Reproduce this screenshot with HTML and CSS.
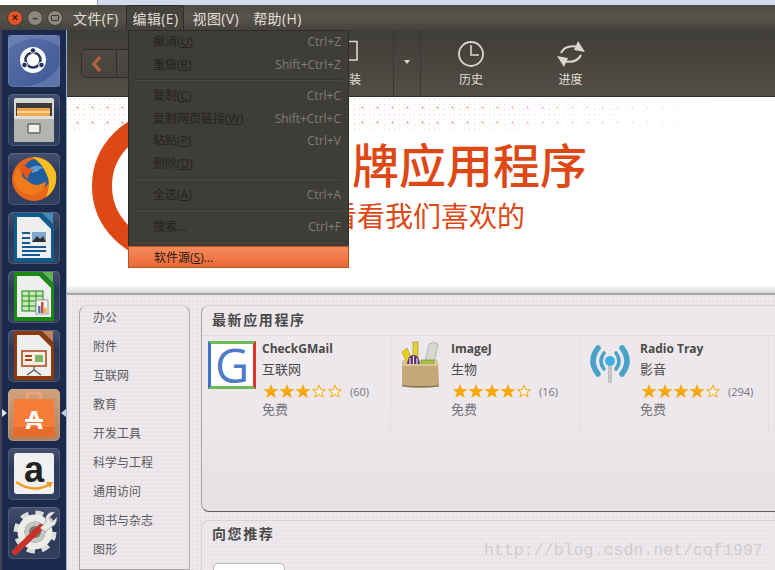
FILE: index.html
```html
<!DOCTYPE html>
<html>
  <head>
    <meta charset="utf-8">
    <title>Ubuntu 软件中心</title>
    <link rel="stylesheet" href="styles.css">
  </head>
  <body>
    <svg class="defs" width="0" height="0">
      <symbol id="star" viewBox="0 0 16 16"><polygon points="8,1 10,6 15.5,6.2 11.2,9.6 12.8,15 8,11.9 3.2,15 4.8,9.6 .5,6.2 6,6" fill="#f9a70f"/></symbol>
      <symbol id="star-empty" viewBox="0 0 16 16"><polygon points="8,2 9.8,6.6 14.4,6.8 10.8,9.6 12.1,14 8,11.4 3.9,14 5.2,9.6 1.6,6.8 6.2,6.6" fill="#f5f0ea" stroke="#f9a70f" stroke-width="1"/></symbol>
    </svg>

    <div class="desktop-strip"><div class="behind-window"></div></div>

    <header class="titlebar">
      <div class="window-buttons">
        <span class="win-btn close">×</span>
        <span class="win-btn">–</span>
        <span class="win-btn"><i class="max-box"></i></span>
      </div>
      <nav class="menubar">
        <span class="menubar-item">文件(F)</span>
        <span class="menubar-item active">编辑(E)</span>
        <span class="menubar-item">视图(V)</span>
        <span class="menubar-item">帮助(H)</span>
      </nav>
    </header>

    <div class="main">
      <aside class="launcher">
        <div class="tile tile-ubuntu">
          <svg viewBox="0 0 52 52">
            <path d="M0 14 Q26 -6 52 12 V0 H0Z M52 30 Q40 50 14 52 H52Z" fill="#8093c0" opacity=".45"/>
            <circle cx="25" cy="25" r="13" fill="#fff"/>
            <circle cx="25" cy="25" r="7.5" fill="none" stroke="#27345c" stroke-width="2.6"/>
            <circle cx="25" cy="15.5" r="2.8" fill="#27345c" stroke="#fff"/>
            <circle cx="16.5" cy="30" r="2.8" fill="#27345c" stroke="#fff"/>
            <circle cx="33.5" cy="30" r="2.8" fill="#27345c" stroke="#fff"/>
          </svg>
        </div>
        <div class="tile">
          <svg viewBox="0 0 52 52">
            <rect x="6" y="4" width="40" height="44" rx="2" fill="#d8d8d4"/>
            <rect x="8" y="9" width="36" height="14" fill="#3c3c3a"/>
            <rect x="9" y="14" width="33" height="10" fill="#f2a54a"/>
            <rect x="9" y="17" width="33" height="2" fill="#fbd78f"/>
            <rect x="6" y="22" width="40" height="26" rx="1" fill="#b5b5b0"/>
            <rect x="6" y="22" width="40" height="3" fill="#dededa"/>
            <rect x="20" y="30" width="12" height="9" rx="1" fill="#f0f0ec" stroke="#666" stroke-width="1.4"/>
          </svg>
        </div>
        <div class="tile">
          <svg viewBox="0 0 52 52">
            <circle cx="26" cy="26" r="22" fill="#e8661c"/>
            <circle cx="29" cy="21" r="15" fill="#1f5f9f"/>
            <path d="M22 15 Q30 10 37 16 Q32 14 30 18 L24 20Z" fill="#5f9fd0"/>
            <path d="M24 4 Q42 4 48 20 Q50 36 38 44 Q44 30 38 20 Q34 10 24 4Z" fill="#f9bd1f"/>
            <path d="M10 14 Q14 26 20 28 Q28 36 38 28 Q36 42 22 42 Q6 38 6 24Z" fill="#f07a1c"/>
            <path d="M14 10 Q18 16 26 16 Q20 20 20 26 Q12 22 14 10Z" fill="#e8561a"/>
          </svg>
        </div>
        <div class="tile">
          <svg viewBox="0 0 52 52">
            <path d="M6 1 H33 L46 14 V50 H6Z" fill="#0e5b8c"/>
            <path d="M34 1 H45 V12Z" fill="#3f8db9"/>
            <path d="M9 5 H31 L43 17 V46 H9Z" fill="#eeeeee"/>
            <rect x="14" y="20" width="8" height="2" fill="#125a94"/>
            <rect x="14" y="25" width="8" height="2" fill="#125a94"/>
            <rect x="14" y="30" width="8" height="2" fill="#125a94"/>
            <rect x="24" y="20" width="14" height="10" fill="#7fa9cf"/>
            <path d="M24 30 L29 24 L32 27 L35 24 L38 30Z" fill="#2f2f2f"/>
            <rect x="14" y="34" width="24" height="2" fill="#125a94"/>
            <rect x="14" y="38" width="24" height="2" fill="#125a94"/>
            <rect x="14" y="42" width="18" height="2" fill="#125a94"/>
          </svg>
        </div>
        <div class="tile">
          <svg viewBox="0 0 52 52">
            <path d="M6 1 H33 L46 14 V50 H6Z" fill="#1b8a12"/>
            <path d="M34 1 H45 V12Z" fill="#5cb356"/>
            <path d="M9 5 H31 L43 17 V46 H9Z" fill="#eeeeee"/>
            <rect x="14" y="20" width="21" height="20" fill="#c8e8b8" stroke="#1b8a12"/>
            <path d="M14 25 H35 M14 30 H35 M14 35 H35 M21 20 V40 M28 20 V40" stroke="#1b8a12"/>
            <rect x="28" y="29" width="12" height="14" fill="#f4f4f4" stroke="#999"/>
            <rect x="30" y="35" width="2.5" height="7" fill="#3d7fc0"/>
            <rect x="33" y="31" width="2.5" height="11" fill="#d8492a"/>
            <rect x="36" y="37" width="2.5" height="5" fill="#e8b33a"/>
          </svg>
        </div>
        <div class="tile">
          <svg viewBox="0 0 52 52">
            <path d="M6 1 H33 L46 14 V50 H6Z" fill="#8c3a0b"/>
            <path d="M34 1 H45 V12Z" fill="#c0825a"/>
            <path d="M9 5 H31 L43 17 V46 H9Z" fill="#eeeeee"/>
            <rect x="14" y="21" width="24" height="15" fill="#fbeee0" stroke="#a8431a" stroke-width="1.5"/>
            <rect x="17" y="25" width="7" height="2" fill="#a8431a"/>
            <rect x="17" y="29" width="7" height="2" fill="#a8431a"/>
            <rect x="27" y="25" width="8" height="7" fill="#7db56a"/>
            <path d="M26 36 V40 M26 40 L19 45 M26 40 L33 45" stroke="#555" stroke-width="1.2" fill="none"/>
          </svg>
        </div>
        <div class="launcher-item-active">
          <span class="pip pip-left"></span>
          <div class="tile tile-software">
            <svg viewBox="0 0 52 52">
              <path d="M19 13 V8 Q19 4 23 4 H29 Q33 4 33 8 V13" fill="none" stroke="#f3a27a" stroke-width="3"/>
              <path d="M6 10 H46 L47 48 H5Z" fill="#f67c3a"/>
              <path d="M5.4 38 H46.6 L47 48 H5Z" fill="#e66c2c"/>
              <text class="bag-letter" x="26" y="40" text-anchor="middle">A</text>
              <rect x="17" y="30" width="18" height="3" fill="#fff"/>
              <rect x="19" y="33" width="14" height="1" fill="#f67c3a"/>
            </svg>
          </div>
          <span class="pip pip-right"></span>
        </div>
        <div class="tile">
          <svg viewBox="0 0 52 52">
            <rect x="6" y="5" width="40" height="41" rx="3" fill="#f0f0f0"/>
            <text class="amazon-letter" x="26" y="34" text-anchor="middle">a</text>
            <path d="M8 34 Q26 46 42 36" fill="none" stroke="#f39a1e" stroke-width="2.4"/>
            <path d="M38 34 L45 34 L42 40Z" fill="#f39a1e"/>
          </svg>
        </div>
        <div class="tile">
          <svg viewBox="0 0 52 52">
            <circle cx="27" cy="25" r="19" fill="none" stroke="#dcdcd8" stroke-width="5" stroke-dasharray="8 6.9"/>
            <circle cx="27" cy="25" r="14" fill="none" stroke="#ececE8" stroke-width="7"/>
            <circle cx="27" cy="25" r="10.5" fill="#c6c6c2"/>
            <circle cx="27" cy="25" r="6" fill="#77776f"/>
            <path d="M7 45 L33 20" stroke="#c8322a" stroke-width="6" stroke-linecap="round"/>
            <path d="M32 21 L38 15 Q36 8 43 5 L47 5 L41 11 L44 15 L49 10 Q49 18 43 20 L37 25Z" fill="#e8e8e4" stroke="#888" stroke-width=".6"/>
          </svg>
        </div>
      </aside>

      <div class="app">
        <div class="toolbar">
          <div class="nav-group">
            <span class="nav-back">
              <svg width="14" height="18" viewBox="0 0 14 18"><path d="M10 2 L4 9 L10 16" fill="none" stroke="#b5633a" stroke-width="3.4"/></svg>
            </span>
          </div>
          <div class="tool tool-install">
            <svg width="30" height="30" viewBox="0 0 30 30"><path d="M0 2.5 H8 V21 H0" fill="none" stroke="#d9d6cf" stroke-width="1.6"/></svg>
            <span>装</span>
          </div>
          <div class="tool-arrow"></div>
          <div class="tool">
            <svg width="30" height="30" viewBox="0 0 30 30">
              <circle cx="15" cy="15" r="12" fill="none" stroke="#d9d6cf" stroke-width="1.8"/>
              <path d="M15 6 V16 H23" fill="none" stroke="#d9d6cf" stroke-width="1.6"/>
            </svg>
            <span>历史</span>
          </div>
          <div class="tool tool-last">
            <svg width="30" height="30" viewBox="0 0 30 30">
              <g id="sync-half">
                <path d="M5 14 Q9 6 20 7.5" fill="none" stroke="#d9d6cf" stroke-width="2.2"/>
                <polygon points="22,2 29,13 18,11" fill="#d9d6cf"/>
              </g>
              <use href="#sync-half" transform="rotate(180 15 15)"/>
            </svg>
            <span>进度</span>
          </div>
        </div>

        <section class="banner">
          <div class="dots"></div>
          <div class="ring"></div>
          <h1 class="banner-title">牌应用程序</h1>
          <p class="banner-sub">看看我们喜欢的</p>
        </section>

        <div class="lower">
          <ul class="categories">
            <li>办公</li>
            <li>附件</li>
            <li>互联网</li>
            <li>教育</li>
            <li>开发工具</li>
            <li>科学与工程</li>
            <li>通用访问</li>
            <li>图书与杂志</li>
            <li>图形</li>
          </ul>
          <div class="panels">
            <section class="panel panel-new">
              <h2 class="panel-title">最新应用程序</h2>
              <div class="cards">
                <article class="card">
                  <div class="app-icon icon-g"><span>G</span></div>
                  <div class="card-text">
                    <div class="app-name">CheckGMail</div>
                    <div class="app-cat">互联网</div>
                    <div class="rating">
                      <svg><use href="#star"/></svg><svg><use href="#star"/></svg><svg><use href="#star"/></svg><svg><use href="#star-empty"/></svg><svg><use href="#star-empty"/></svg>
                      <span class="count">(60)</span>
                    </div>
                    <div class="price">免费</div>
                  </div>
                </article>
                <article class="card">
                  <div class="app-icon">
                    <svg width="48" height="48" viewBox="0 0 48 48">
                      <path d="M5 11 L10 7 L16 21 L11 24Z" fill="#e8d020" stroke="#9a8a10" stroke-width=".6"/>
                      <rect x="16" y="1" width="5" height="18" fill="#e8cf3c" stroke="#9a8a10" stroke-width=".6"/>
                      <path d="M28 21 L32 3 Q37 0 41 3 L37 22Z" fill="#d8d8d2" stroke="#999" stroke-width=".6"/>
                      <path d="M10 26 Q10 14 16.5 14 Q23 14 23 26Z" fill="#5c2a6a"/>
                      <path d="M13 26 V17 M16.5 26 V15 M20 26 V17" stroke="#eee" stroke-width="1.2"/>
                      <rect x="24" y="19" width="13" height="6" fill="#a8c040" stroke="#6c7c20" stroke-width=".6"/>
                      <path d="M5 23 H41 L42 44 Q24 46 5 44Z" fill="#c4a877"/>
                      <path d="M5 20 L8 18 L10 23 H37 L39 18 L41 20 L42 25 H5Z" fill="#dcc498"/>
                      <path d="M5 44 Q24 46 42 44 V45.5 Q24 48 5 45.5Z" fill="#8c7448"/>
                    </svg>
                  </div>
                  <div class="card-text">
                    <div class="app-name">ImageJ</div>
                    <div class="app-cat">生物</div>
                    <div class="rating">
                      <svg><use href="#star"/></svg><svg><use href="#star"/></svg><svg><use href="#star"/></svg><svg><use href="#star"/></svg><svg><use href="#star-empty"/></svg>
                      <span class="count">(16)</span>
                    </div>
                    <div class="price">免费</div>
                  </div>
                </article>
                <article class="card">
                  <div class="app-icon">
                    <svg width="48" height="48" viewBox="0 0 48 48">
                      <rect x="22" y="22" width="4" height="20" fill="#c4c4c4"/>
                      <path d="M12 7 Q2 20 12 33" fill="none" stroke="#4aa3c6" stroke-width="5.5" stroke-linecap="round"/>
                      <path d="M36 7 Q46 20 36 33" fill="none" stroke="#4aa3c6" stroke-width="5.5" stroke-linecap="round"/>
                      <path d="M18 12 Q12 20 18 28" fill="none" stroke="#4aa3c6" stroke-width="3.6" stroke-linecap="round"/>
                      <path d="M30 12 Q36 20 30 28" fill="none" stroke="#4aa3c6" stroke-width="3.6" stroke-linecap="round"/>
                      <circle cx="24" cy="20" r="5" fill="#3fb0e6"/>
                    </svg>
                  </div>
                  <div class="card-text">
                    <div class="app-name">Radio Tray</div>
                    <div class="app-cat">影音</div>
                    <div class="rating">
                      <svg><use href="#star"/></svg><svg><use href="#star"/></svg><svg><use href="#star"/></svg><svg><use href="#star"/></svg><svg><use href="#star-empty"/></svg>
                      <span class="count">(294)</span>
                    </div>
                    <div class="price">免费</div>
                  </div>
                </article>
                <article class="card"></article>
              </div>
            </section>
            <section class="panel panel-rec">
              <h2 class="panel-title">向您推荐</h2>
              <div class="rec-tile"></div>
            </section>
          </div>
        </div>
      </div>
    </div>

    <div class="edit-menu">
      <div class="menu-row"><span>撤消(<u>U</u>)</span><span class="shortcut">Ctrl+Z</span></div>
      <div class="menu-row"><span>重做(<u>R</u>)</span><span class="shortcut">Shift+Ctrl+Z</span></div>
      <div class="menu-sep"></div>
      <div class="menu-row"><span>复制(<u>C</u>)</span><span class="shortcut">Ctrl+C</span></div>
      <div class="menu-row"><span>复制网页链接(<u>W</u>)</span><span class="shortcut">Shift+Ctrl+C</span></div>
      <div class="menu-row"><span>粘贴(<u>P</u>)</span><span class="shortcut">Ctrl+V</span></div>
      <div class="menu-row"><span>删除(<u>D</u>)</span></div>
      <div class="menu-sep"></div>
      <div class="menu-row"><span>全选(<u>A</u>)</span><span class="shortcut">Ctrl+A</span></div>
      <div class="menu-sep"></div>
      <div class="menu-row"><span>搜索...</span><span class="shortcut">Ctrl+F</span></div>
      <div class="menu-sep"></div>
      <div class="menu-row selected"><span>软件源(<u>S</u>)...</span></div>
    </div>

    <div class="watermark">http://blog.csdn.net/cqf1997</div>
  </body>
</html>
```
FILE: styles.css
```css
* {
  box-sizing: border-box;
}
html, body {
  margin: 0;
  padding: 0;
}
body {
  position: relative;
  width: 775px;
  height: 570px;
  overflow: hidden;
  display: flex;
  flex-direction: column;
  font-family: "Open Sans", "Noto Sans CJK SC", sans-serif;
  background: #ece8ec;
}
.defs {
  position: absolute;
}

/* window chrome */
.desktop-strip {
  height: 5px;
  flex: none;
  background: #d5daee;
}
.behind-window {
  width: 98px;
  height: 5px;
  background: #fff;
  border-right: 1px solid #9aa0b4;
}
.titlebar {
  height: 25px;
  flex: none;
  display: flex;
  align-items: center;
  background: linear-gradient(#4a4841, #57544c 45%, #45433d);
}
.window-buttons {
  display: flex;
  gap: 4px;
  margin-left: 7px;
  width: 60px;
}
.win-btn {
  width: 16px;
  height: 16px;
  border-radius: 50%;
  background: #8c887c;
  border: 1px solid #3c3a34;
  color: #3a3832;
  font-size: 12px;
  line-height: 13px;
  font-weight: 700;
  text-align: center;
  display: flex;
  align-items: center;
  justify-content: center;
}
.win-btn.close {
  background: #e2552a;
  color: #4a1a08;
}
.max-box {
  display: block;
  width: 8px;
  height: 6px;
  border: 1px solid #3a3832;
  border-radius: 1px;
}
.menubar {
  display: flex;
  height: 25px;
}
.menubar-item {
  padding: 0 4px 0 5px;
  margin-right: 3px;
  font-size: 14px;
  letter-spacing: .4px;
  line-height: 25px;
  color: #e2ded6;
  border: 1px solid transparent;
  border-bottom: none;
  white-space: nowrap;
}
.menubar-item.active {
  background: #44423c;
  border-color: #2e2d29;
  border-radius: 3px 3px 0 0;
}

/* launcher */
.main {
  flex: 1;
  display: flex;
  min-height: 0;
}
.launcher {
  width: 67px;
  flex: none;
  display: flex;
  flex-direction: column;
  align-items: center;
  gap: 7px;
  padding-top: 5px;
  background: #1b2a4c;
  border-left: 2px solid #3b4254;
  border-right: 1px solid #8fb0d8;
}
.tile {
  width: 52px;
  height: 52px;
  flex: none;
  border-radius: 5px;
  background: linear-gradient(#46506e, #2a3858 40%, #34405f);
  box-shadow: inset 0 0 0 1px rgba(255, 255, 255, .12);
}
.tile svg {
  display: block;
  width: 52px;
  height: 52px;
}
.tile-ubuntu {
  background: linear-gradient(135deg, #5a70a8, #3f5a96);
}
.tile-software {
  background: linear-gradient(#cfa27c, #ab8460);
}
.launcher-item-active {
  position: relative;
  height: 52px;
  width: 52px;
}
.pip {
  position: absolute;
  top: 20px;
  width: 0;
  height: 0;
  border-top: 4px solid transparent;
  border-bottom: 4px solid transparent;
}
.pip-left {
  left: -6px;
  border-left: 5px solid #dfe3ea;
}
.pip-right {
  right: -6px;
  border-right: 5px solid #c4d0e2;
}
.bag-letter {
  font: 700 25px "Open Sans", sans-serif;
  fill: #fff;
}
.amazon-letter {
  font: 700 36px "Liberation Sans", sans-serif;
  fill: #222;
}

/* toolbar */
.app {
  flex: 1;
  min-width: 0;
  display: flex;
  flex-direction: column;
}
.toolbar {
  height: 67px;
  flex: none;
  display: flex;
  background: linear-gradient(#3f3d37, #514e46);
  border-bottom: 1px solid #2f2e2a;
}
.nav-group {
  width: 70px;
  height: 29px;
  margin: 19px 0 0 14px;
  border: 1px solid #2f2e2a;
  border-radius: 5px;
  background: linear-gradient(#4d4a43, #45433c);
}
.nav-back {
  display: flex;
  align-items: center;
  justify-content: center;
  width: 35px;
  height: 27px;
  padding-right: 4px;
  border-right: 1px solid #2f2e2a;
}
.tool {
  width: 100px;
  padding-top: 9px;
  display: flex;
  flex-direction: column;
  align-items: center;
  color: #e2ded6;
  font-size: 12px;
  line-height: 18px;
}
.tool svg {
  display: block;
  margin-bottom: 2px;
}
.tool-install {
  width: 44px;
  margin-left: 198px;
  align-items: flex-start;
}
.tool-last {
  width: 99px;
}
.tool-arrow {
  width: 28px;
  position: relative;
  border-left: 1px solid #3a3833;
  border-right: 1px solid #3a3833;
}
.tool-arrow::after {
  content: "";
  position: absolute;
  left: 10px;
  top: 30px;
  border-left: 3px solid transparent;
  border-right: 3px solid transparent;
  border-top: 4px solid #d9d6cf;
}

/* banner */
.banner {
  position: relative;
  height: 198px;
  flex: none;
  padding: 40px 0 0 285px;
  overflow: hidden;
  background: linear-gradient(#fff 188px, #d8d6d6 196px);
  border-bottom: 2px solid #a5a3a5;
}
.dots {
  position: absolute;
  left: 0;
  top: 0;
  right: 0;
  height: 34px;
  background:
    radial-gradient(circle, #f5b8a6 1px, transparent 1.4px) 3px 3px / 15px 15px,
    radial-gradient(circle, #f8cfc4 .5px, transparent .9px) 0 0 / 5px 5px;
  -webkit-mask-image: linear-gradient(to right, #000 55%, transparent 92%);
  mask-image: linear-gradient(to right, #000 55%, transparent 92%);
}
.ring {
  position: absolute;
  left: 25px;
  top: 14px;
  width: 150px;
  height: 150px;
  border: 20px solid #dd4814;
  border-radius: 50%;
}
.banner-title {
  position: relative;
  margin: 0;
  font-size: 47px;
  font-weight: 500;
  line-height: 56px;
  color: #dd4814;
  white-space: nowrap;
}
.banner-sub {
  position: relative;
  margin: 5px 0 0 -23px;
  font-size: 28px;
  line-height: 36px;
  color: #dd4814;
  white-space: nowrap;
}

/* lower part */
.lower {
  flex: 1;
  min-height: 0;
  display: flex;
  gap: 11px;
  padding: 10px 0 0 12px;
  background: #ece8ec radial-gradient(circle, #e2dee2 .6px, transparent 1px) 0 0 / 4px 4px;
}
.categories {
  width: 111px;
  flex: none;
  margin: 0;
  padding: 0 0 0 13px;
  list-style: none;
  display: flex;
  flex-direction: column;
  gap: 5px;
  overflow: hidden;
  border: 1px solid #aaa6aa;
  border-top-color: #d8d4d8;
  border-radius: 8px 8px 0 0;
  background: #ece8ec radial-gradient(circle, #e4e0e4 .6px, transparent 1px) 0 0 / 4px 4px;
}
.categories li {
  flex: none;
  height: 24px;
  line-height: 24px;
  font-size: 12px;
  color: #5c5a5c;
  white-space: nowrap;
}
.panels {
  flex: 1;
  min-width: 0;
  display: flex;
  flex-direction: column;
  gap: 8px;
}
.panel {
  border: 1px solid #d6d2d6;
  border-right: none;
  border-radius: 8px 0 0 8px;
  background: #ece8ec radial-gradient(circle, #e4e0e4 .6px, transparent 1px) 0 0 / 4px 4px;
}
.panel-new {
  height: 207px;
  flex: none;
  border-left-color: #a8a4a8;
  border-bottom: 1px solid #5f5d5f;
  background: linear-gradient(#ece8ec 50%, #e4e0e4);
}
.panel-rec {
  flex: 1;
  border-radius: 8px 0 0 0;
  border-bottom: none;
}
.panel-title {
  margin: 0;
  padding-left: 10px;
  height: 30px;
  font-size: 14px;
  line-height: 27px;
  font-weight: 700;
  letter-spacing: 1.6px;
  color: #4a4a4a;
}
.panel-new .panel-title {
  border-bottom: 1px solid #dcd8dc;
}
.panel-rec .panel-title {
  line-height: 26px;
}
.cards {
  display: flex;
  overflow: hidden;
}
.card {
  width: 189px;
  height: 96px;
  flex: none;
  display: flex;
  gap: 6px;
  padding: 5px 0 0 6px;
  border-right: 1px solid #e0dce0;
}
.app-icon {
  width: 48px;
  height: 48px;
  flex: none;
}
.app-icon svg {
  display: block;
}
.icon-g {
  display: flex;
  align-items: center;
  justify-content: center;
  background: #fff;
  border-style: solid;
  border-width: 3px;
  border-color: #6cbb54 #d8352c #6cbb54 #3f6fd0;
}
.icon-g span {
  font-family: "Open Sans", sans-serif;
  font-size: 47px;
  line-height: 42px;
  color: #4f7bc8;
}
.app-name {
  font-size: 12px;
  line-height: 16px;
  font-weight: 700;
  color: #4c4a48;
  white-space: nowrap;
}
.app-cat {
  margin-top: 1px;
  font-size: 13px;
  line-height: 22px;
  color: #4c4a48;
}
.rating {
  margin-top: 3px;
  padding-left: 1px;
  height: 16px;
  display: flex;
  align-items: center;
  white-space: nowrap;
}
.rating svg {
  width: 16px;
  height: 16px;
  flex: none;
}
.count {
  margin-left: 7px;
  font-size: 11px;
  color: #74727e;
}
.price {
  margin-top: 1px;
  font-size: 13px;
  line-height: 18px;
  color: #77757a;
}
.rec-tile {
  width: 72px;
  height: 30px;
  margin: 12px 0 0 11px;
  background: #fff;
  border: 1px solid #bdbabd;
  border-radius: 5px 5px 0 0;
}

/* edit menu, dropped over the window */
.edit-menu {
  position: absolute;
  left: 128px;
  top: 30px;
  width: 221px;
  height: 238px;
  background: #3f3d37;
  border: 1px solid #2e2d29;
  border-bottom-color: #b04c22;
  font-size: 12px;
  color: #23221e;
}
.menu-row {
  display: flex;
  justify-content: space-between;
  height: 22.5px;
  line-height: 21px;
  padding: 0 7px 0 24px;
}
.menu-row u {
  text-underline-offset: 1px;
}
.shortcut {
  color: #7f7d74;
}
.menu-sep {
  height: 1px;
  margin: 3.5px 6px 4.5px;
  background: #4c4a44;
  box-shadow: 0 -1px 0 #35332e;
}
.menu-row.selected {
  height: 22px;
  margin: -1px -1px 0;
  padding-left: 25px;
  border: 1px solid #b85428;
  background: linear-gradient(#f78a5c, #ea6a35);
  color: #2a1c14;
}
.watermark {
  position: absolute;
  left: 484px;
  top: 541px;
  font-family: "Liberation Mono", monospace;
  font-size: 16.6px;
  line-height: 20px;
  color: #cfcdcf;
  white-space: nowrap;
}
```
